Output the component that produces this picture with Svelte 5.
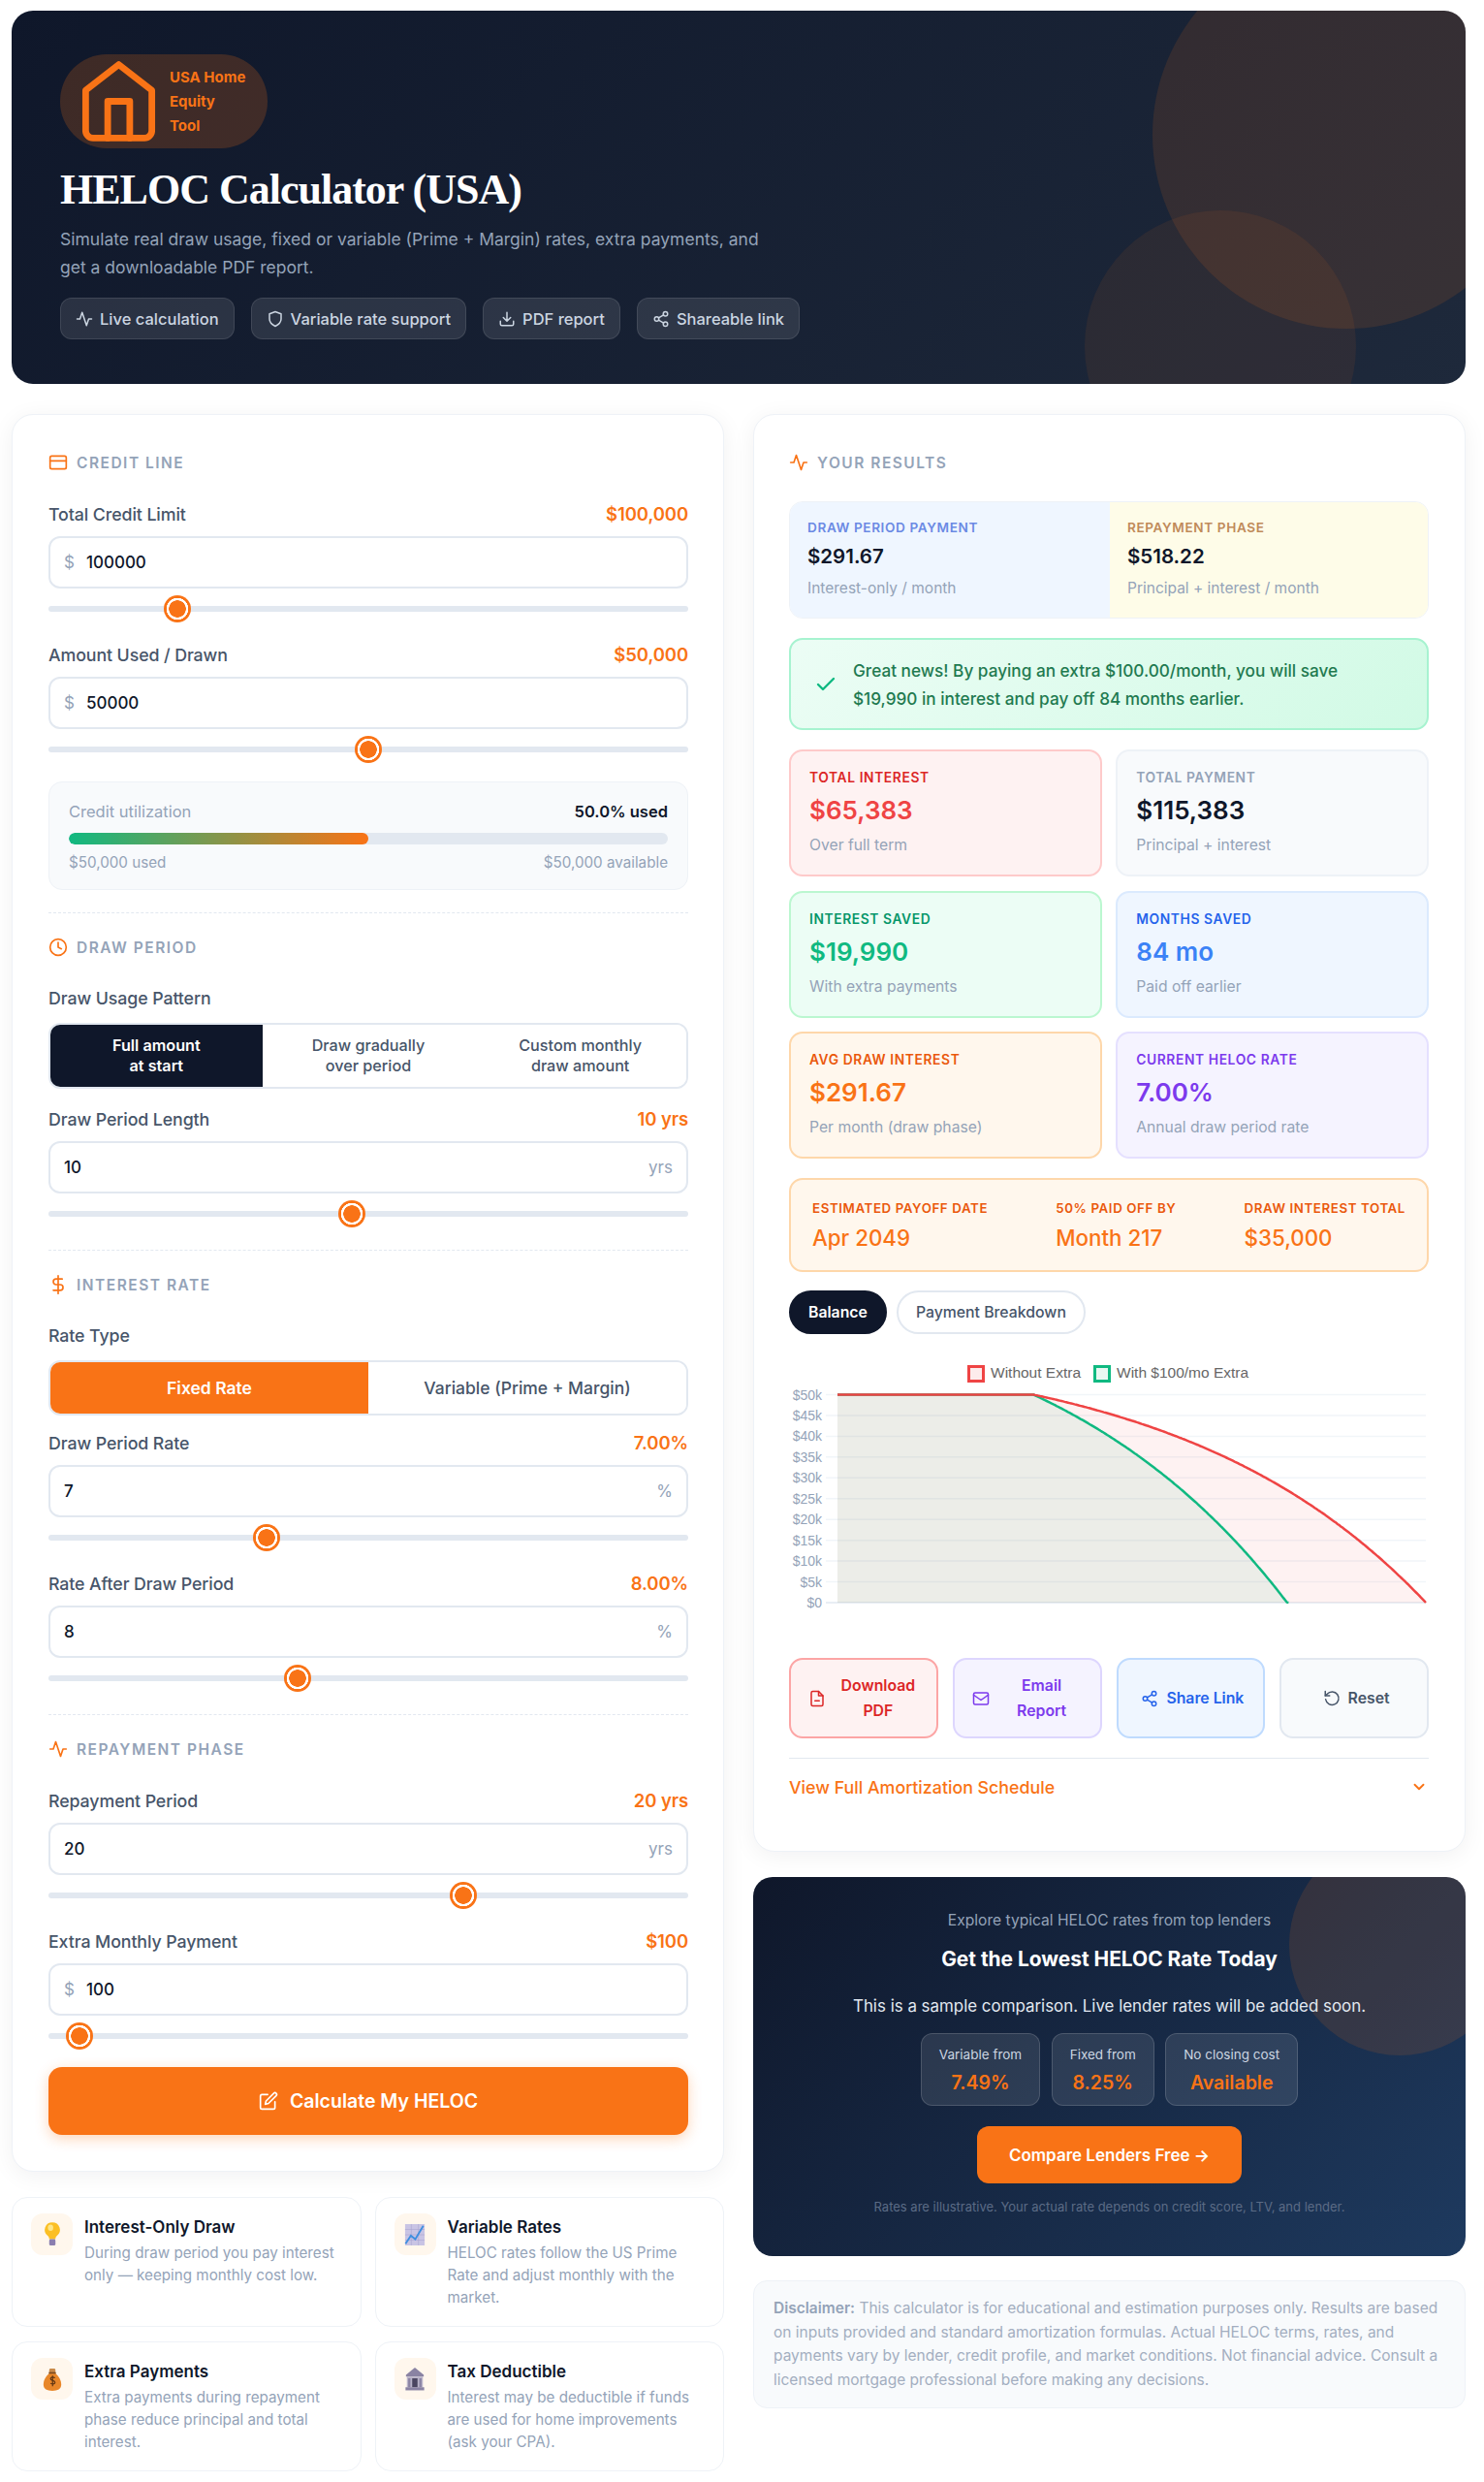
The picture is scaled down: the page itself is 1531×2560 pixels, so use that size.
<script lang="ts">
	interface Field {
		label: string;
		value: number;
		min: number;
		max: number;
		step: number;
		prefix?: string;
		suffix?: string;
		show: (v: number) => string;
	}

	const money = (v: number) => '$' + Number(v).toLocaleString('en-US');
	const years = (v: number) => v + ' yrs';
	const pct = (v: number) => Number(v).toFixed(2) + '%';

	let credit = $state<Field>({ label: 'Total Credit Limit', value: 100000, min: 10000, max: 490000, step: 1000, prefix: '$', show: money });
	let drawn = $state<Field>({ label: 'Amount Used / Drawn', value: 50000, min: 0, max: 100000, step: 500, prefix: '$', show: money });
	let drawYears = $state<Field>({ label: 'Draw Period Length', value: 10, min: 1, max: 20, step: 1, suffix: 'yrs', show: years });
	let drawRate = $state<Field>({ label: 'Draw Period Rate', value: 7, min: 0.5, max: 20, step: 0.25, suffix: '%', show: pct });
	let afterRate = $state<Field>({ label: 'Rate After Draw Period', value: 8, min: 0.5, max: 20, step: 0.25, suffix: '%', show: pct });
	let repayYears = $state<Field>({ label: 'Repayment Period', value: 20, min: 1, max: 30, step: 1, suffix: 'yrs', show: years });
	let extra = $state<Field>({ label: 'Extra Monthly Payment', value: 100, min: 0, max: 3500, step: 25, prefix: '$', show: money });

	let pattern = $state<string>('full');
	let rateType = $state<string>('fixed');
	let tab = $state<string>('balance');

	const usedPct = $derived(Math.min(100, (drawn.value / credit.value) * 100));

	const stats = [
		{ tone: 'red', label: 'Total Interest', value: '$65,383', sub: 'Over full term' },
		{ tone: 'gray', label: 'Total Payment', value: '$115,383', sub: 'Principal + interest' },
		{ tone: 'green', label: 'Interest Saved', value: '$19,990', sub: 'With extra payments' },
		{ tone: 'blue', label: 'Months Saved', value: '84 mo', sub: 'Paid off earlier' },
		{ tone: 'orange', label: 'Avg Draw Interest', value: '$291.67', sub: 'Per month (draw phase)' },
		{ tone: 'purple', label: 'Current HELOC Rate', value: '7.00%', sub: 'Annual draw period rate' }
	];

	// chart: balance over 360 months, drawn in the coordinates of the svg
	const ticks = [50, 45, 40, 35, 30, 25, 20, 15, 10, 5, 0];
	const plotX = (m: number) => 50 + (m / 360) * 607;
	const plotY = (b: number) => 42.5 + (1 - b / 50000) * 214.5;

	function balanceLine(extraPay: number): string[] {
		const r = 0.08 / 12;
		const pay = (50000 * r) / (1 - Math.pow(1 + r, -240)) + extraPay;
		const pts = [`${plotX(0)},${plotY(50000)}`, `${plotX(120)},${plotY(50000)}`];
		let bal = 50000;
		for (let m = 121; m <= 360 && bal > 0; m++) {
			bal = Math.max(0, bal * (1 + r) - pay);
			pts.push(`${plotX(m).toFixed(1)},${plotY(bal).toFixed(1)}`);
		}
		return pts;
	}

	const redPts = balanceLine(0);
	const greenPts = balanceLine(100);
	const area = (pts: string[]) => `${plotX(0)},${plotY(0)} ${pts.join(' ')} ${pts[pts.length - 1].split(',')[0]},${plotY(0)}`;
</script>

{#snippet field(f: Field)}
	<div class="field">
		<div class="field-top">
			<span>{f.label}</span>
			<b>{f.show(f.value)}</b>
		</div>
		<div class="input-box">
			{#if f.prefix}<span class="prefix">{f.prefix}</span>{/if}
			<input type="number" bind:value={f.value} min={f.min} max={f.max} step={f.step} />
			{#if f.suffix}<span class="suffix">{f.suffix}</span>{/if}
		</div>
		<input class="slider" type="range" bind:value={f.value} min={f.min} max={f.max} step={f.step} />
	</div>
{/snippet}

{#snippet pulse()}
	<path d="M22 12h-4l-3 9L9 3l-3 9H2" />
{/snippet}

{#snippet nodes()}
	<circle cx="18" cy="5" r="3" /><circle cx="6" cy="12" r="3" /><circle cx="18" cy="19" r="3" />
	<path d="M8.6 13.5l6.8 4M15.4 6.5l-6.8 4" />
{/snippet}

<div class="page">
	<header class="hero">
		<div class="blob blob-big"></div>
		<div class="blob blob-small"></div>
		<div class="logo">
			<svg viewBox="0 0 24 24" fill="none" stroke="#f97316" stroke-width="1.8" stroke-linecap="round" stroke-linejoin="round">
				<path d="M3 9l9-7 9 7v11a2 2 0 0 1-2 2H5a2 2 0 0 1-2-2z" />
				<path d="M9 22V12h6v10" />
			</svg>
			<span>USA Home<br />Equity<br />Tool</span>
		</div>
		<h1>HELOC Calculator (USA)</h1>
		<p>Simulate real draw usage, fixed or variable (Prime + Margin) rates, extra payments, and get a downloadable PDF report.</p>
		<div class="chips">
			<span class="chip"><svg class="ic" viewBox="0 0 24 24">{@render pulse()}</svg>Live calculation</span>
			<span class="chip"><svg class="ic" viewBox="0 0 24 24"><path d="M12 22s8-4 8-10V5l-8-3-8 3v7c0 6 8 10 8 10z" /></svg>Variable rate support</span>
			<span class="chip"><svg class="ic" viewBox="0 0 24 24"><path d="M21 15v4a2 2 0 0 1-2 2H5a2 2 0 0 1-2-2v-4M7 10l5 5 5-5M12 15V3" /></svg>PDF report</span>
			<span class="chip"><svg class="ic" viewBox="0 0 24 24">{@render nodes()}</svg>Shareable link</span>
		</div>
	</header>

	<div class="columns">
		<div class="col">
			<section class="card card-left">
				<h2 class="head">
					<svg class="ic" viewBox="0 0 24 24"><rect x="2" y="4" width="20" height="16" rx="2" /><path d="M2 10h20" /></svg>
					Credit Line
				</h2>
				{@render field(credit)}
				{@render field(drawn)}
				<div class="util">
					<div class="util-top"><span>Credit utilization</span><b>{usedPct.toFixed(1)}% used</b></div>
					<div class="bar"><div class="bar-fill" style="width: {usedPct}%"></div></div>
					<div class="util-foot">
						<span>{money(drawn.value)} used</span>
						<span>{money(credit.value - drawn.value)} available</span>
					</div>
				</div>
				<hr />

				<h2 class="head">
					<svg class="ic" viewBox="0 0 24 24"><circle cx="12" cy="12" r="10" /><path d="M12 6v6l4 2" /></svg>
					Draw Period
				</h2>
				<div class="plain-label">Draw Usage Pattern</div>
				<div class="seg seg-three">
					<button class:dark={pattern === 'full'} onclick={() => (pattern = 'full')}>Full amount<br />at start</button>
					<button class:dark={pattern === 'gradual'} onclick={() => (pattern = 'gradual')}>Draw gradually<br />over period</button>
					<button class:dark={pattern === 'custom'} onclick={() => (pattern = 'custom')}>Custom monthly<br />draw amount</button>
				</div>
				{@render field(drawYears)}
				<hr />

				<h2 class="head">
					<svg class="ic" viewBox="0 0 24 24"><path d="M12 1v22M17 5H9.500a3.500 3.500 0 0 0 0 7h5a3.500 3.500 0 0 1 0 7H6" /></svg>
					Interest Rate
				</h2>
				<div class="plain-label">Rate Type</div>
				<div class="seg seg-two">
					<button class:orange={rateType === 'fixed'} onclick={() => (rateType = 'fixed')}>Fixed Rate</button>
					<button class:orange={rateType === 'variable'} onclick={() => (rateType = 'variable')}>Variable (Prime + Margin)</button>
				</div>
				{@render field(drawRate)}
				{@render field(afterRate)}
				<hr />

				<h2 class="head">
					<svg class="ic" viewBox="0 0 24 24">{@render pulse()}</svg>
					Repayment Phase
				</h2>
				{@render field(repayYears)}
				{@render field(extra)}
				<button class="calc">
					<svg class="ic" viewBox="0 0 24 24"><path d="M11 4H4a2 2 0 0 0-2 2v14a2 2 0 0 0 2 2h14a2 2 0 0 0 2-2v-7" /><path d="M18.500 2.500a2.100 2.100 0 0 1 3 3L12 15l-4 1 1-4z" /></svg>
					Calculate My HELOC
				</button>
			</section>

			<div class="features">
				<div class="feature">
					<div class="emoji">
						<svg viewBox="0 0 24 32">
							<path d="M12 2a8.500 8.500 0 0 0-5 15.400c1 .8 1.500 2 1.500 3.600h7c0-1.600.5-2.800 1.500-3.600A8.500 8.500 0 0 0 12 2z" fill="#fbbf24" />
							<ellipse cx="10" cy="8" rx="3" ry="3.500" fill="#fde68a" />
							<rect x="8.500" y="21" width="7" height="7" rx="1.500" fill="#8b7fb0" />
						</svg>
					</div>
					<div>
						<h3>Interest-Only Draw</h3>
						<p>During draw period you pay interest only — keeping monthly cost low.</p>
					</div>
				</div>
				<div class="feature">
					<div class="emoji">
						<svg viewBox="0 0 24 32">
							<rect x="1" y="4" width="22" height="24" fill="#c9c4e4" />
							<path d="M1 10h22M1 16h22M1 22h22M8 4v24M16 4v24" stroke="#a9a3cf" stroke-width=".6" />
							<path d="M1.500 26l6-9 5 4 9-15" fill="none" stroke="#3f8fe0" stroke-width="2" />
						</svg>
					</div>
					<div>
						<h3>Variable Rates</h3>
						<p>HELOC rates follow the US Prime Rate and adjust monthly with the market.</p>
					</div>
				</div>
				<div class="feature">
					<div class="emoji">
						<svg viewBox="0 0 24 32">
							<path d="M9 9C4 13 2 18 2 22c0 5 4 7 10 7s10-2 10-7c0-4-2-9-7-13z" fill="#e8872a" />
							<rect x="8.500" y="4" width="7" height="5" rx="1.500" fill="#c98a4a" />
							<rect x="8" y="8" width="8" height="1.800" fill="#7a4a20" />
							<path d="M15 14.500c-2-1.500-5-1-5 1 0 2.500 5 1.500 5 4 0 2-3 2.500-5 1M12.300 12v12" fill="none" stroke="#5d3413" stroke-width="1.300" />
						</svg>
					</div>
					<div>
						<h3>Extra Payments</h3>
						<p>Extra payments during repayment phase reduce principal and total interest.</p>
					</div>
				</div>
				<div class="feature">
					<div class="emoji">
						<svg viewBox="0 0 24 32">
							<path d="M12 3L2 11v2h20v-2z" fill="#8a83a3" />
							<rect x="3" y="13" width="18" height="12" fill="#b9b4c9" />
							<rect x="9" y="15" width="6" height="10" fill="#4a4560" />
							<rect x="4.500" y="15" width="2.500" height="10" fill="#8a83a3" />
							<rect x="17" y="15" width="2.500" height="10" fill="#8a83a3" />
							<rect x="1.500" y="25" width="21" height="3.500" fill="#8a83a3" />
						</svg>
					</div>
					<div>
						<h3>Tax Deductible</h3>
						<p>Interest may be deductible if funds are used for home improvements (ask your CPA).</p>
					</div>
				</div>
			</div>
		</div>

		<div class="col">
			<section class="card card-right">
				<h2 class="head">
					<svg class="ic" viewBox="0 0 24 24">{@render pulse()}</svg>
					Your Results
				</h2>
				<div class="split">
					<div class="split-a">
						<small>Draw Period Payment</small>
						<strong>$291.67</strong>
						<span>Interest-only / month</span>
					</div>
					<div class="split-b">
						<small>Repayment Phase</small>
						<strong>$518.22</strong>
						<span>Principal + interest / month</span>
					</div>
				</div>

				<div class="alert">
					<svg viewBox="0 0 24 24" fill="none" stroke="#10b981" stroke-width="2.400" stroke-linecap="round" stroke-linejoin="round"><path d="M20 6L9 17l-5-5" /></svg>
					<p>Great news! By paying an extra $100.00/month, you will save $19,990 in interest and pay off 84 months earlier.</p>
				</div>

				<div class="stats">
					{#each stats as s}
						<div class="stat {s.tone}">
							<small>{s.label}</small>
							<strong>{s.value}</strong>
							<span>{s.sub}</span>
						</div>
					{/each}
				</div>

				<div class="summary">
					<div><small>Estimated Payoff Date</small><strong>Apr 2049</strong></div>
					<div><small>50% Paid Off By</small><strong>Month 217</strong></div>
					<div><small>Draw Interest Total</small><strong>$35,000</strong></div>
				</div>

				<div class="tabs">
					<button class:on={tab === 'balance'} onclick={() => (tab = 'balance')}>Balance</button>
					<button class:on={tab === 'breakdown'} onclick={() => (tab = 'breakdown')}>Payment Breakdown</button>
				</div>

				<svg class="chart" viewBox="0 0 660 300">
					<rect x="185.500" y="13.500" width="15" height="15" fill="#fdecec" stroke="#ef4444" stroke-width="3" />
					<text x="208" y="25" class="legend">Without Extra</text>
					<rect x="315.500" y="13.500" width="15" height="15" fill="#e8f8f2" stroke="#10b981" stroke-width="3" />
					<text x="338" y="25" class="legend">With $100/mo Extra</text>

					{#each ticks as t}
						<line x1="38" x2="657" y1={plotY(t * 1000)} y2={plotY(t * 1000)} stroke={t === 0 ? '#e2e8f0' : '#f1f5f9'} stroke-width="1.500" />
						<text x="34" y={plotY(t * 1000) + 5} text-anchor="end" class="tick">{t === 0 ? '$0' : `$${t}k`}</text>
					{/each}

					<polygon points={area(greenPts)} fill="rgba(16,185,129,.08)" />
					<polygon points={area(redPts)} fill="rgba(239,68,68,.07)" />
					<polyline points={greenPts.join(' ')} fill="none" stroke="#10b981" stroke-width="2.500" />
					<polyline points={redPts.join(' ')} fill="none" stroke="#ef4444" stroke-width="2.500" />
				</svg>

				<div class="actions">
					<button class="act act-red">
						<svg class="ic" viewBox="0 0 24 24"><path d="M14 2H6a2 2 0 0 0-2 2v16a2 2 0 0 0 2 2h12a2 2 0 0 0 2-2V8z" /><path d="M14 2v6h6M9 15h6" /></svg>
						<span>Download PDF</span>
					</button>
					<button class="act act-purple">
						<svg class="ic" viewBox="0 0 24 24"><rect x="2" y="4" width="20" height="16" rx="2" /><path d="M22 7l-10 7L2 7" /></svg>
						<span>Email Report</span>
					</button>
					<button class="act act-blue">
						<svg class="ic" viewBox="0 0 24 24">{@render nodes()}</svg>
						<span>Share Link</span>
					</button>
					<button class="act act-gray">
						<svg class="ic" viewBox="0 0 24 24"><path d="M3 2v6h6" /><path d="M3.500 13a9 9 0 1 0 2.100-7.400L3 8" /></svg>
						<span>Reset</span>
					</button>
				</div>

				<div class="schedule">
					<span>View Full Amortization Schedule</span>
					<svg class="ic" viewBox="0 0 24 24"><path d="M6 9l6 6 6-6" /></svg>
				</div>
			</section>

			<section class="cta">
				<div class="blob cta-blob"></div>
				<div class="cta-kicker">Explore typical HELOC rates from top lenders</div>
				<h3>Get the Lowest HELOC Rate Today</h3>
				<div class="cta-note">This is a sample comparison. Live lender rates will be added soon.</div>
				<div class="rates">
					<div><span>Variable from</span><b>7.49%</b></div>
					<div><span>Fixed from</span><b>8.25%</b></div>
					<div><span>No closing cost</span><b>Available</b></div>
				</div>
				<button class="cta-btn">Compare Lenders Free →</button>
				<div class="cta-small">Rates are illustrative. Your actual rate depends on credit score, LTV, and lender.</div>
			</section>

			<div class="disclaimer">
				<b>Disclaimer:</b> This calculator is for educational and estimation purposes only. Results are based on inputs provided and standard amortization formulas. Actual HELOC terms, rates, and payments vary by lender, credit profile, and market conditions. Not financial advice. Consult a licensed mortgage professional before making any decisions.
			</div>
		</div>
	</div>
</div>

<style>
	:global(body) { background: #fff; font-family: Inter, "Noto Sans", sans-serif; color: #0f172a; }
	.page { width: 1500px; padding: 11px 0 0 12px; }
	.ic { width: 18px; height: 18px; flex: none; fill: none; stroke: currentColor; stroke-width: 2; stroke-linecap: round; stroke-linejoin: round; }

	/* hero */
	.hero { position: relative; overflow: hidden; height: 385px; box-sizing: border-box; padding: 45px 50px 0; border-radius: 22px; background: linear-gradient(135deg, #0f172a, #1e293b); }
	.blob { position: absolute; border-radius: 50%; background: rgba(249, 115, 22, .12); }
	.blob-big { width: 400px; height: 400px; left: 1177px; top: -72px; }
	.blob-small { width: 280px; height: 280px; left: 1107px; top: 206px; background: rgba(249, 115, 22, .08); }
	.logo { display: flex; align-items: center; width: 214px; height: 97px; box-sizing: border-box; padding-left: 15px; border-radius: 48px; background: rgba(249, 115, 22, .2); }
	.logo svg { width: 91px; height: 91px; flex: none; }
	.logo span { margin-left: 7px; color: #f97316; font-size: 15px; font-weight: 700; line-height: 25px; }
	h1 { margin: 17px 0 0; color: #fff; font: 700 44px/52px "Liberation Serif", serif; letter-spacing: -1px; }
	.hero p { width: 750px; margin: 10px 0 0; color: #94a3b8; font-size: 17.500px; line-height: 29px; position: relative; }
	.chips { display: flex; gap: 17px; margin-top: 17px; }
	.chip { display: flex; align-items: center; gap: 7px; height: 43px; box-sizing: border-box; padding: 0 15px; border: 1px solid rgba(255, 255, 255, .1); border-radius: 12px; background: rgba(255, 255, 255, .1); color: #cbd5e1; font-size: 16.500px; font-weight: 500; }

	.columns { display: grid; grid-template-columns: 735px 735px; gap: 30px; margin-top: 31px; align-items: start; }
	.col { display: flex; flex-direction: column; }
	.card { box-sizing: border-box; padding: 39px 37px 37px; border: 1px solid #eef2f7; border-radius: 22px; background: #fff; box-shadow: 0 4px 24px rgba(15, 23, 42, .06); }
	.card-left { padding-right: 36px; }
	.card-right { padding-left: 36px; }
	.head { display: flex; align-items: center; gap: 9px; height: 20px; margin: 0 0 33px; color: #94a3b8; font-size: 15.500px; font-weight: 600; letter-spacing: 1.500px; text-transform: uppercase; }
	.head .ic { width: 20px; height: 20px; color: #f97316; }
	.card-right .head { margin-bottom: 30px; }
	hr { margin: 23px 0 25px; border: 0; border-top: 1px dashed #e2e8f0; }

	/* fields */
	.field { margin-bottom: 23px; }
	.field:has(+ hr) { margin-bottom: 0; }
	.field-top { display: flex; justify-content: space-between; align-items: center; height: 20px; margin-bottom: 13px; color: #475569; font-size: 17.800px; font-weight: 500; letter-spacing: -.1px; }
	.field-top b { color: #f97316; font-size: 18.500px; font-weight: 600; }
	.input-box { display: flex; align-items: center; height: 54px; box-sizing: border-box; padding: 0 14px; border: 2px solid #e2e8f0; border-radius: 12px; background: #fff; }
	.input-box input { flex: 1; min-width: 0; border: 0; outline: 0; padding: 0; background: none; color: #0f172a; font: 500 17px Inter, sans-serif; appearance: textfield; }
	.prefix { margin-right: 12px; color: #94a3b8; font-size: 17px; }
	.suffix { color: #94a3b8; font-size: 17px; }
	.slider { display: block; width: 100%; height: 28px; margin: 7px 0 0; appearance: none; background: none; }
	.slider::-webkit-slider-runnable-track { height: 6px; border-radius: 3px; background: #e2e8f0; }
	.slider::-webkit-slider-thumb { appearance: none; width: 28px; height: 28px; margin-top: -11px; border-radius: 50%; background: radial-gradient(circle, #f97316 0 8.500px, #fff 9px 11px, #f97316 11.500px); }

	.util { box-sizing: border-box; height: 112px; margin-top: -4px; padding: 20px 20px 0; border: 1px solid #eef2f7; border-radius: 14px; background: #f8fafc; }
	.util-top, .util-foot { display: flex; justify-content: space-between; }
	.util-top { color: #94a3b8; font-size: 16.500px; line-height: 20px; }
	.util-top b { color: #0f172a; font-weight: 600; }
	.bar { height: 12px; margin: 12px 0 10px; border-radius: 6px; background: #e2e8f0; overflow: hidden; }
	.bar-fill { height: 100%; border-radius: 6px; background: linear-gradient(90deg, #10b981, #f97316); }
	.util-foot { color: #94a3b8; font-size: 15.200px; line-height: 18px; }

	.plain-label { height: 20px; margin-bottom: 15px; color: #475569; font-size: 17.800px; font-weight: 500; letter-spacing: -.1px; line-height: 20px; }
	.seg { display: grid; overflow: hidden; margin-bottom: 21px; border: 2px solid #e2e8f0; border-radius: 12px; }
	.seg button { border: 0; padding: 0; background: #fff; color: #475569; font-family: inherit; font-weight: 500; }
	.seg-three { grid-template-columns: repeat(3, 1fr); height: 64px; }
	.seg-three button { font-size: 16.200px; line-height: 21.500px; }
	.seg-two { grid-template-columns: repeat(2, 1fr); height: 53px; margin-bottom: 18px; }
	.seg-two button { font-size: 17.500px; }
	.seg button.dark { background: #0f172a; color: #fff; font-weight: 600; }
	.seg button.orange { background: #f97316; color: #fff; font-weight: 600; }

	.calc { display: flex; align-items: center; justify-content: center; gap: 12px; width: 100%; height: 70px; margin-top: -5px; border: 0; border-radius: 14px; background: #f97316; color: #fff; font: 600 19.500px Inter, sans-serif; box-shadow: 0 4px 14px rgba(249, 115, 22, .3); }
	.calc .ic { width: 20px; height: 20px; }

	/* feature cards */
	.features { display: grid; grid-template-columns: 1fr 1fr; grid-auto-rows: 134px; gap: 15px 14px; margin-top: 26px; }
	.feature { display: flex; gap: 12px; box-sizing: border-box; padding: 16px 14px 0 19px; border: 1px solid #eef2f7; border-radius: 16px; background: #fff; }
	.emoji { display: flex; align-items: center; justify-content: center; width: 43px; height: 43px; flex: none; border-radius: 12px; background: #fff7ed; }
	.emoji svg { width: 22px; height: 30px; }
	.feature h3 { margin: 3px 0 4px; color: #0f172a; font-size: 17px; font-weight: 600; line-height: 22px; }
	.feature p { margin: 0; color: #94a3b8; font-size: 15.200px; line-height: 23px; }

	/* results */
	.split { display: grid; grid-template-columns: 330px 330px; height: 119px; overflow: hidden; border: 1px solid #eef2f7; border-radius: 14px; }
	.split > div { display: flex; flex-direction: column; box-sizing: border-box; padding: 17px 18px 0; }
	.split-a { background: #eff6ff; }
	.split-b { background: #fefce8; }
	.split small { font-size: 13.600px; font-weight: 600; letter-spacing: .6px; line-height: 18px; text-transform: uppercase; }
	.split-a small { color: #6b8ae4; }
	.split-b small { color: #c08a5a; }
	.split strong { margin-top: 5px; color: #0f172a; font-size: 20.500px; font-weight: 600; line-height: 32px; }
	.split span { margin-top: 7px; color: #94a3b8; font-size: 15.500px; line-height: 20px; }

	.alert { display: flex; align-items: center; gap: 16px; box-sizing: border-box; height: 95px; margin: 20px 0; padding: 0 24px; border: 2px solid #a7f3d0; border-radius: 14px; background: linear-gradient(135deg, #ecfdf5, #d1fae5); }
	.alert svg { width: 24px; height: 24px; flex: none; }
	.alert p { margin: 0; color: #1f7a50; font-size: 17.200px; font-weight: 500; line-height: 29px; }

	.stats { display: grid; grid-template-columns: 1fr 1fr; grid-auto-rows: 131px; gap: 14.500px; }
	.stat { display: flex; flex-direction: column; box-sizing: border-box; padding: 18px 19px 0; border: 2px solid; border-radius: 14px; }
	.stat small { font-size: 13.800px; font-weight: 600; letter-spacing: .6px; line-height: 18px; text-transform: uppercase; }
	.stat strong { margin-top: 6px; font-size: 26px; font-weight: 600; line-height: 38px; }
	.stat span { margin-top: 7px; color: #94a3b8; font-size: 15.700px; line-height: 20px; }
	.red { background: #fef2f2; border-color: #fecaca; } .red small { color: #dc2626; } .red strong { color: #ef4444; }
	.gray { background: #f8fafc; border-color: #eef2f7; } .gray small { color: #94a3b8; } .gray strong { color: #0f172a; }
	.green { background: #ecfdf5; border-color: #bbf7d0; } .green small { color: #059669; } .green strong { color: #10b981; }
	.blue { background: #eff6ff; border-color: #dbeafe; } .blue small { color: #2563eb; } .blue strong { color: #3b82f6; }
	.orange { background: #fff7ed; border-color: #fed7aa; } .orange small { color: #ea580c; } .orange strong { color: #f97316; }
	.purple { background: #f5f3ff; border-color: #e5e0ff; } .purple small { color: #7c3aed; } .purple strong { color: #7c3aed; }

	.summary { display: flex; justify-content: space-between; box-sizing: border-box; height: 97px; margin-top: 20px; padding: 20px 22px 0; border: 2px solid #fed7aa; border-radius: 14px; background: #fff7ed; }
	.summary div { display: flex; flex-direction: column; }
	.summary small { color: #ea580c; font-size: 13.300px; font-weight: 600; letter-spacing: .6px; line-height: 18px; text-transform: uppercase; }
	.summary strong { margin-top: 6px; color: #f97316; font-size: 22.300px; font-weight: 500; line-height: 32px; }

	.tabs { display: flex; gap: 10px; margin-top: 19px; }
	.tabs button { height: 45px; padding: 0 18px; border: 2px solid #e2e8f0; border-radius: 23px; background: #fff; color: #475569; font: 500 15.800px Inter, sans-serif; }
	.tabs button.on { border-color: #0f172a; background: #0f172a; color: #fff; font-weight: 600; }

	.chart { display: block; width: 660px; height: 300px; margin: 20px 0 14px; }
	.legend { fill: #666; font: 15.500px "Liberation Sans", sans-serif; }
	.tick { fill: #94a3b8; font: 14px "Liberation Sans", sans-serif; }

	.actions { display: grid; grid-template-columns: repeat(4, 1fr); gap: 15px; }
	.act { display: flex; align-items: center; justify-content: center; gap: 8px; height: 83px; box-sizing: border-box; padding: 0 14px 0 18px; border: 2px solid; border-radius: 14px; font: 600 15.800px/26px Inter, sans-serif; }
	.act span { text-align: center; }
	.act-red { background: #fef2f2; border-color: #fca5a5; color: #dc2626; }
	.act-purple { background: #f5f3ff; border-color: #ddd6fe; color: #7c3aed; }
	.act-blue { background: #eff6ff; border-color: #bfdbfe; color: #2563eb; }
	.act-gray { background: #f8fafc; border-color: #e2e8f0; color: #475569; }

	.schedule { display: flex; justify-content: space-between; align-items: center; height: 58px; margin-top: 20px; border-top: 1px solid #e2e8f0; color: #f97316; font-size: 17.800px; font-weight: 500; }
	.schedule .ic { margin-right: 1px; stroke-width: 2.500; }

	/* lender promo */
	.cta { position: relative; overflow: hidden; box-sizing: border-box; height: 391px; margin-top: 26px; padding-top: 35px; border-radius: 20px; background: linear-gradient(135deg, #0f172a, #1e3a5f); text-align: center; }
	.cta-blob { width: 228px; height: 228px; left: 553px; top: -44px; background: rgba(249, 115, 22, .13); }
	.cta > div:not(.blob), .cta h3, .cta-btn { position: relative; }
	.cta-kicker { color: #94a3b8; font-size: 15.600px; line-height: 20px; }
	.cta h3 { margin: 15px 0 0; color: #fff; font-size: 20.900px; font-weight: 700; line-height: 30px; }
	.cta-note { margin-top: 22px; color: #e2e8f0; font-size: 16.900px; line-height: 22px; }
	.rates { display: flex; justify-content: center; gap: 11.500px; margin-top: 17px; }
	.rates div { display: flex; flex-direction: column; box-sizing: border-box; height: 75px; padding: 11px 18px 0; border: 1px solid rgba(255, 255, 255, .15); border-radius: 12px; background: rgba(255, 255, 255, .1); }
	.rates span { color: #cbd5e1; font-size: 13.500px; line-height: 20px; }
	.rates b { margin-top: 5px; color: #f97316; font-size: 19.500px; font-weight: 600; line-height: 28px; }
	.cta-btn { display: block; width: 273px; height: 59px; margin: 21px auto 0; border: 0; border-radius: 12px; background: #f97316; color: #fff; font: 600 17px Inter, sans-serif; }
	.cta-small { margin-top: 15px; color: #5b6b85; font-size: 13px; line-height: 18px; }

	.disclaimer { box-sizing: border-box; height: 132px; margin-top: 25px; padding: 16px 20px 0; border: 1px solid #eef2f7; border-radius: 14px; background: #f8fafc; color: #a3aec0; font-size: 15.500px; line-height: 24.500px; }
	.disclaimer b { color: #94a3b8; font-weight: 600; }
</style>
